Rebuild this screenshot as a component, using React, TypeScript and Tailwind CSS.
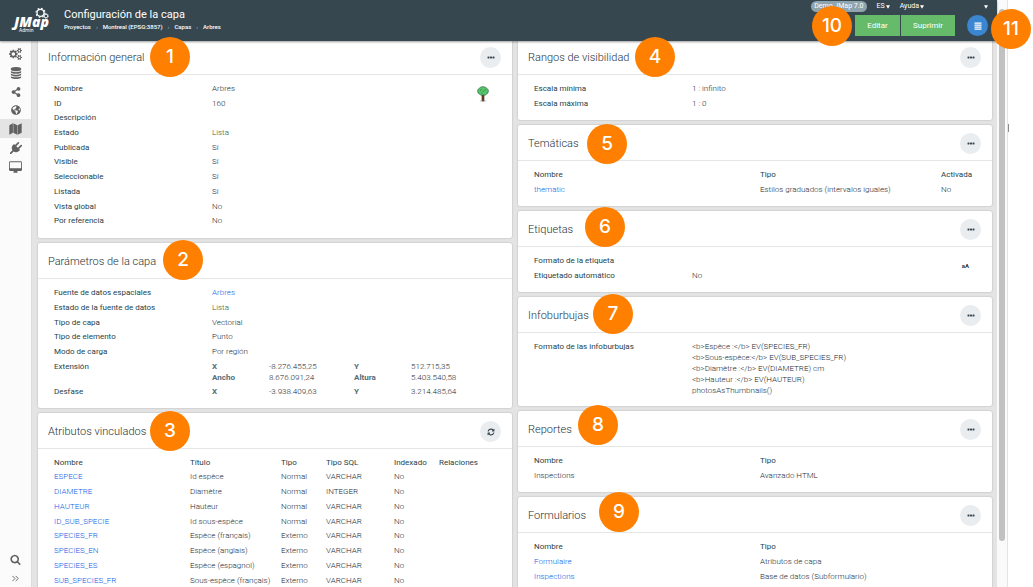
import React from 'react';
import { FaShareAlt, FaGlobeAmericas } from 'react-icons/fa';
import { ChevronsRight } from 'lucide-react';

interface CardProps {
  title: string;
  action?: 'more' | 'refresh' | 'none';
  children: React.ReactNode;
}

interface Field {
  label: string;
  value?: React.ReactNode;
}

interface Attribute {
  name: string;
  title: string;
  type: string;
  sqlType: string;
}

const generalInfo: Field[] = [
  { label: 'Nombre', value: 'Arbres' },
  { label: 'ID', value: '160' },
  { label: 'Descripción' },
  { label: 'Estado', value: <span className="text-[#1f5f1f]">Lista</span> },
  { label: 'Publicada', value: 'Sí' },
  { label: 'Visible', value: 'Sí' },
  { label: 'Seleccionable', value: 'Sí' },
  { label: 'Listada', value: 'Sí' },
  { label: 'Vista global', value: 'No' },
  { label: 'Por referencia', value: 'No' },
];

const layerParams: Field[] = [
  { label: 'Fuente de datos espaciales', value: <a href="#arbres" className="text-[#0f62e6]">Arbres</a> },
  { label: 'Estado de la fuente de datos', value: <span className="text-[#1f5f1f]">Lista</span> },
  { label: 'Tipo de capa', value: 'Vectorial' },
  { label: 'Tipo de elemento', value: 'Punto' },
  { label: 'Modo de carga', value: 'Por región' },
];

const attributes: Attribute[] = [
  { name: 'ESPECE', title: 'Id espèce', type: 'Normal', sqlType: 'VARCHAR' },
  { name: 'DIAMETRE', title: 'Diamètre', type: 'Normal', sqlType: 'INTEGER' },
  { name: 'HAUTEUR', title: 'Hauteur', type: 'Normal', sqlType: 'VARCHAR' },
  { name: 'ID_SUB_SPECIE', title: 'Id sous-espèce', type: 'Normal', sqlType: 'VARCHAR' },
  { name: 'SPECIES_FR', title: 'Espèce (français)', type: 'Externo', sqlType: 'VARCHAR' },
  { name: 'SPECIES_EN', title: 'Espèce (anglais)', type: 'Externo', sqlType: 'VARCHAR' },
  { name: 'SPECIES_ES', title: 'Espèce (espagnol)', type: 'Externo', sqlType: 'VARCHAR' },
  { name: 'SUB_SPECIES_FR', title: 'Sous-espèce (français)', type: 'Externo', sqlType: 'VARCHAR' },
];

const bubbleFormat = [
  '<b>Espèce :</b> EV(SPECIES_FR)',
  '<b>Sous-espèce:</b> EV(SUB_SPECIES_FR)',
  '<b>Diamètre :</b> EV(DIAMETRE) cm',
  '<b>Hauteur :</b> EV(HAUTEUR)',
  'photosAsThumbnails()',
];

const callouts = [
  { n: 1, x: 170, y: 57 },
  { n: 2, x: 183, y: 260 },
  { n: 3, x: 170, y: 431 },
  { n: 4, x: 655, y: 57 },
  { n: 5, x: 607, y: 144 },
  { n: 6, x: 605, y: 227 },
  { n: 7, x: 613, y: 314 },
  { n: 8, x: 598, y: 425 },
  { n: 9, x: 619, y: 512 },
  { n: 10, x: 832, y: 26 },
  { n: 11, x: 1011, y: 29 },
];

function CogsIcon() {
  return (
    <svg viewBox="0 0 1920 1792" className="h-[12px] w-[13px]" fill="currentColor">
      <path d="M896 896q0-106-75-181t-181-75-181 75-75 181 75 181 181 75 181-75 75-181zm768 512q0-52-38-90t-90-38-90 38-38 90q0 53 37.5 90.5t90.5 37.5 90.5-37.5 37.5-90.5zm0-1024q0-52-38-90t-90-38-90 38-38 90q0 53 37.5 90.5t90.5 37.5 90.5-37.5 37.5-90.5zm-384 421v185q0 10-7 19.5t-16 10.5l-155 24q-11 35-32 76 34 48 90 115 7 11 7 20 0 12-7 19-23 30-82.5 89.5t-78.5 59.5q-11 0-21-7l-115-90q-37 19-77 31-11 108-23 155-7 24-30 24h-186q-11 0-20-7.5t-10-17.5l-23-153q-34-10-75-31l-118 89q-7 7-20 7-11 0-21-8-144-133-144-160 0-9 7-19 10-14 41-53t47-61q-23-44-35-82l-152-24q-10-1-17-9.5t-7-19.5v-185q0-10 7-19.5t16-10.5l155-24q11-35 32-76-34-48-90-115-7-11-7-20 0-12 7-20 22-30 82-89t79-59q11 0 21 7l115 90q34-18 77-32 11-108 23-154 7-24 30-24h186q11 0 20 7.5t10 17.5l23 153q34 10 75 31l118-89q8-7 20-7 11 0 21 8 144 133 144 160 0 8-7 19-12 16-42 54t-45 60q23 48 34 82l152 23q10 2 17 10.5t7 19.5zm640 533v140q0 16-149 31-12 27-30 52 51 113 51 138 0 4-4 7-122 71-124 71-8 0-46-47t-52-68q-20 2-30 2t-30-2q-14 21-52 68t-46 47q-2 0-124-71-4-3-4-7 0-25 51-138-18-25-30-52-149-15-149-31v-140q0-16 149-31 13-29 30-52-51-113-51-138 0-4 4-7 4-2 35-20t59-34 30-16q8 0 46 46.5t52 67.5q20-2 30-2t30 2q51-71 92-112l6-2q4 0 124 70 4 3 4 7 0 25-51 138 17 23 30 52 149 15 149 31zm0-1024v140q0 16-149 31-12 27-30 52 51 113 51 138 0 4-4 7-122 71-124 71-8 0-46-47t-52-68q-20 2-30 2t-30-2q-14 21-52 68t-46 47q-2 0-124-71-4-3-4-7 0-25 51-138-18-25-30-52-149-15-149-31v-140q0-16 149-31 13-29 30-52-51-113-51-138 0-4 4-7 4-2 35-20t59-34 30-16q8 0 46 46.5t52 67.5q20-2 30-2t30 2q51-71 92-112l6-2q4 0 124 70 4 3 4 7 0 25-51 138 17 23 30 52 149 15 149 31z" />
    </svg>
  );
}

function DatabaseIcon() {
  return (
    <svg viewBox="0 0 1792 1792" className="h-[12px] w-[12px]" fill="currentColor">
      <path d="M896 768q237 0 443-43t325-127v170q0 69-103 128t-280 93.5-385 34.5-385-34.5-280-93.5-103-128v-170q119 84 325 127t443 43zm0 768q237 0 443-43t325-127v170q0 69-103 128t-280 93.5-385 34.5-385-34.5-280-93.5-103-128v-170q119 84 325 127t443 43zm0-384q237 0 443-43t325-127v170q0 69-103 128t-280 93.5-385 34.5-385-34.5-280-93.5-103-128v-170q119 84 325 127t443 43zm0-1152q208 0 385 34.5t280 93.5 103 128v128q0 69-103 128t-280 93.5-385 34.5-385-34.5-280-93.5-103-128v-128q0-69 103-128t280-93.5 385-34.5z" />
    </svg>
  );
}

function MapIcon() {
  return (
    <svg viewBox="0 0 24 22" className="h-[12px] w-[13px]" fill="currentColor">
      <path d="M0.6 4.2L7.2 0.6V18L0.6 21.600zM8 0.600L15.200 4.200V21.600L8 18zM16 4.200L23.400 0.600V18L16 21.600z" />
    </svg>
  );
}

function PlugIcon() {
  return (
    <svg viewBox="0 0 1792 1792" className="h-[12px] w-[12px]" fill="currentColor">
      <path d="M1755 453q37 38 37 90.5t-37 90.5l-401 400 150 150-160 160q-163 163-389.5 186.5t-411.5-100.5l-362 362h-181v-181l362-362q-124-185-100.5-411.5t186.5-389.5l160-160 150 150 400-401q38-37 91-37t90 37 37 90.5-37 90.5l-400 401 234 234 401-400q38-37 91-37t90 37z" />
    </svg>
  );
}

function DesktopIcon() {
  return (
    <svg viewBox="-64 0 1920 1664" className="h-[12px] w-[13px]" fill="currentColor">
      <path d="M1728 992v-832q0-13-9.5-22.5t-22.5-9.5h-1600q-13 0-22.5 9.5t-9.5 22.5v832q0 13 9.5 22.5t22.5 9.5h1600q13 0 22.5-9.5t9.5-22.5zm128-832v1088q0 66-47 113t-113 47h-544q0 37 16 77.5t32 71 16 43.5q0 26-19 45t-45 19h-512q-26 0-45-19t-19-45q0-14 16-44t32-70 16-78h-544q-66 0-113-47t-47-113v-1088q0-66 47-113t113-47h1600q66 0 113 47t47 113z" />
    </svg>
  );
}

function SearchIcon() {
  return (
    <svg viewBox="0 0 1792 1792" className="h-[11px] w-[11px]" fill="currentColor">
      <path d="M1216 832q0-185-131.5-316.5t-316.5-131.5-316.5 131.5-131.5 316.5 131.5 316.5 316.5 131.5 316.5-131.5 131.5-316.5zm512 832q0 52-38 90t-90 38q-54 0-90-38l-343-342q-179 124-399 124-143 0-273.5-55.5t-225-150-150-225-55.5-273.5 55.5-273.5 150-225 225-150 273.5-55.5 273.5 55.5 225 150 150 225 55.5 273.5q0 220-124 399l343 343q37 37 37 90z" />
    </svg>
  );
}

function RefreshIcon() {
  return (
    <svg viewBox="0 0 1792 1792" className="h-[8px] w-[8px]" fill="currentColor">
      <path d="M1639 1056q0 5-1 7-64 268-268 434.5t-478 166.5q-146 0-282.5-55t-243.5-157l-129 129q-19 19-45 19t-45-19-19-45v-448q0-26 19-45t45-19h448q26 0 45 19t19 45-19 45l-137 137q71 66 161 102t187 36q134 0 250-65t186-179q11-17 53-117 8-23 30-23h192q13 0 22.5 9.5t9.5 22.5zm25-800v448q0 26-19 45t-45 19h-448q-26 0-45-19t-19-45 19-45l138-138q-148-137-349-137-134 0-250 65t-186 179q-11 17-53 117-8 23-30 23h-199q-13 0-22.5-9.5t-9.5-22.5v-7q65-268 270-434.5t480-166.5q146 0 284 55.5t245 156.5l130-129q19-19 45-19t45 19 19 45z" />
    </svg>
  );
}

function DotsIcon() {
  return (
    <svg viewBox="0 0 8 3" className="h-[3px] w-[8px]" fill="currentColor">
      <rect x="0.5" y="0.5" width="2" height="2" rx="0.4" />
      <rect x="3" y="0.5" width="2" height="2" rx="0.4" />
      <rect x="5.5" y="0.5" width="2" height="2" rx="0.4" />
    </svg>
  );
}

function Caret() {
  return (
    <svg viewBox="0 0 4 4" className="h-[4px] w-[4px]" fill="currentColor">
      <path d="M0 0.200h4L2 3.800z" />
    </svg>
  );
}

function TreeIcon() {
  return (
    <svg viewBox="0 0 12 16" className="h-[16px] w-[12px]">
      <ellipse cx="6" cy="15" rx="3.4" ry="0.8" fill="#c4c4c4" />
      <path d="M5 8h2v6.8H5z" fill="#7a4420" stroke="#3b2412" strokeWidth="0.6" />
      <path d="M6 0.7c2 0 3 0.8 3.8 1.7 1.2 0.5 1.7 1.6 1.5 2.8 0 1.5-0.8 2.6-2 3.1-1.1 1.2-2.2 0.9-3.3 0.9S3.7 9.4 2.7 8.3C1.5 7.8 0.7 6.7 0.7 5.2 0.5 4 1 2.9 2.2 2.4 3 1.5 4 0.7 6 0.7z" fill="#55c56b" stroke="#1f4a2a" strokeWidth="0.6" />
      <path d="M3 4.5l1.5-1.2M6 5.8l1-1.5M8 3l1 1.2M4.5 7l1 .8" stroke="#1f6a35" strokeWidth="0.7" fill="none" />
    </svg>
  );
}

function Logo() {
  return (
    <svg viewBox="0 0 44 26" className="h-[26px] w-[44px]" fill="#fff">
      <circle cx="30.5" cy="5.8" r="3.5" fill="none" stroke="#fff" strokeWidth="1.3" />
      <circle cx="30.5" cy="5.8" r="4.5" fill="none" stroke="#fff" strokeWidth="1.1" strokeDasharray="1.7 1.834" />
      <circle cx="36" cy="9" r="1.8" fill="none" stroke="#fff" strokeWidth="0.9" />
      <circle cx="36" cy="9" r="2.5" fill="none" stroke="#fff" strokeWidth="0.6" strokeDasharray="1 0.963" />
      <text x="4" y="20" fontFamily="Open Sans, sans-serif" fontSize="14" fontWeight="800" fontStyle="italic">JMap</text>
      <text x="9" y="25" fontFamily="Roboto, sans-serif" fontSize="5">Admin</text>
    </svg>
  );
}

function Card({ title, action = 'more', children }: CardProps) {
  return (
    <section className="rounded-[2px] bg-white shadow-[0_0_2px_rgba(0,0,0,0.25)]">
      <header className="flex h-[36px] items-center justify-between border-b border-[#e4e6e8] pl-[10px] pr-[11px] pt-[2px]">
        <h2 className="pt-[2px] text-[11px] font-light text-[#263238]">{title}</h2>
        {action !== 'none' && (
          <button
            type="button"
            aria-label={action === 'refresh' ? 'Actualizar' : 'Más opciones'}
            className="flex h-[21px] w-[21px] items-center justify-center rounded-full bg-[#e9edf0] text-[#37474f]"
          >
            {action === 'refresh' ? <RefreshIcon /> : <DotsIcon />}
          </button>
        )}
      </header>
      {children}
    </section>
  );
}

function FieldRow({ label, value }: Field) {
  return (
    <div className="grid grid-cols-[158px_1fr] leading-[14px]">
      <dt className="font-normal text-[#263f4a]">{label}</dt>
      <dd>{value}</dd>
    </div>
  );
}

function ExtentLine({ values }: { values: string[] }) {
  return (
    <div className="grid grid-cols-[57px_85px_57px_1fr] leading-[11px]">
      <b className="font-bold text-[#546e7a]">{values[0]}</b>
      <span>{values[1]}</span>
      <b className="font-bold text-[#546e7a]">{values[2]}</b>
      <span>{values[3]}</span>
    </div>
  );
}

function Heading({ children }: { children: React.ReactNode }) {
  return <th scope="col" className="p-0 text-left font-normal text-[#263f4a]">{children}</th>;
}

export default function App() {
  return (
    <div className="relative flex h-screen overflow-hidden bg-white font-[Roboto,sans-serif] text-[8px] font-light text-[#1c2b33]">
      <div className="flex min-w-0 flex-1 flex-col">
        {/* Top bar */}
        <header className="z-10 flex h-[41px] shrink-0 bg-[#37474f] pl-[10px] pr-[9px] font-normal text-white shadow-[0_1px_2px_rgba(0,0,0,0.4)]">
          <a href="#inicio" aria-label="JMap Admin" className="mt-[7px]">
            <Logo />
          </a>
          <div className="ml-[10px] mt-2 flex-1">
            <h1 className="text-[11px] leading-[14px]">Configuración de la capa</h1>
            <nav className="flex gap-[5px] text-[6px] font-medium leading-[10px]">
              <a href="#proyectos">Proyectos</a>
              <span className="text-[#90a4ae]">›</span>
              <a href="#montreal">Montreal (EPSG:3857)</a>
              <span className="text-[#90a4ae]">›</span>
              <a href="#capas">Capas</a>
              <span className="text-[#90a4ae]">›</span>
              <span>Arbres</span>
            </nav>
          </div>
          <div className="flex flex-col items-end">
            <div className="flex h-[13px] items-center text-[7px]">
              <span className="mr-[10px] rounded-full bg-[#90a4ae] px-[3px] leading-[11px]">Demo JMap 7.0</span>
              <button type="button" className="mr-[10px] flex items-center gap-px">ES<Caret /></button>
              <button type="button" className="mr-[60px] flex items-center gap-px">Ayuda<Caret /></button>
              <button type="button" aria-label="Usuario"><Caret /></button>
            </div>
            <div className="mt-[2px] flex items-center">
              <button type="button" className="h-[21px] w-[45px] bg-[#66bb6a] text-[8px]">Editar</button>
              <button type="button" className="ml-px h-[21px] w-[54px] bg-[#66bb6a] text-[8px]">Suprimir</button>
              <button type="button" aria-label="Menú" className="ml-[12px] flex h-[21px] w-[21px] items-center justify-center rounded-full bg-[#3b86d1]">
                <svg viewBox="0 0 8 8" className="h-2 w-2" fill="#fff">
                  <path d="M0.5 0.5h7v1.3h-7zM0.5 2.5h7v1.3h-7zM0.5 4.5h7v1.3h-7zM0.5 6.5h7v1.3h-7z" />
                </svg>
              </button>
            </div>
          </div>
        </header>

        <div className="flex min-h-0 flex-1">
          {/* Sidebar */}
          <nav className="flex w-8 shrink-0 flex-col border-r border-[#dcdcdc] bg-[#fbfbfb] pt-[3px] text-[#616161]">
            <a href="#sistema" aria-label="Sistema" className="flex h-[19px] items-center justify-center"><CogsIcon /></a>
            <a href="#bases" aria-label="Bases de datos" className="flex h-[19px] items-center justify-center"><DatabaseIcon /></a>
            <a href="#conexiones" aria-label="Conexiones" className="flex h-[19px] items-center justify-center"><FaShareAlt className="h-[10px] w-[10px]" /></a>
            <a href="#fuentes" aria-label="Fuentes" className="flex h-[18px] items-center justify-center"><FaGlobeAmericas className="h-[10px] w-[10px]" /></a>
            <a href="#proyectos" aria-label="Proyectos" className="flex h-[19px] items-center justify-center bg-[#e4e4e4]"><MapIcon /></a>
            <a href="#despliegues" aria-label="Despliegues" className="flex h-[19px] items-center justify-center"><PlugIcon /></a>
            <a href="#aplicaciones" aria-label="Aplicaciones" className="flex h-[19px] items-center justify-center"><DesktopIcon /></a>
            <button type="button" aria-label="Buscar" className="mt-auto flex h-[19px] items-center justify-center"><SearchIcon /></button>
            <button type="button" aria-label="Expandir" className="flex h-[18px] items-center justify-center"><ChevronsRight className="h-[11px] w-[11px]" /></button>
          </nav>

          {/* The cards are scrolled slightly under the top bar */}
          <main className="-mt-[2px] grid min-w-0 flex-1 grid-cols-2 items-start gap-[6px] overflow-hidden bg-[#e4e4e4] pl-[6px] pr-[5px]">
            <div className="grid gap-[5px]">
              <Card title="Información general">
                <div className="flex items-start justify-between pb-[9px] pl-4 pr-[23px] pt-[7px]">
                  <dl className="grid min-h-[147px] flex-1 auto-rows-fr">
                    {generalInfo.map((f) => <FieldRow key={f.label} {...f} />)}
                  </dl>
                  <div className="pt-1">
                    <TreeIcon />
                  </div>
                </div>
              </Card>

              <Card title="Parámetros de la capa" action="none">
                <dl className="pb-[9px] pl-4 pt-[7px]">
                  <div className="grid min-h-[74px] auto-rows-fr">
                    {layerParams.map((f) => <FieldRow key={f.label} {...f} />)}
                  </div>
                  <div className="grid grid-cols-[158px_1fr] pb-[2px] pt-[1px] leading-[11px]">
                    <dt className="font-normal text-[#263f4a]">Extensión</dt>
                    <dd>
                      <ExtentLine values={['X', '-8.276.455,25', 'Y', '512.715,35']} />
                      <ExtentLine values={['Ancho', '8.676.091,24', 'Altura', '5.403.540,58']} />
                    </dd>
                  </div>
                  <div className="grid grid-cols-[158px_1fr] pb-[2px] pt-[1px] leading-[11px]">
                    <dt className="font-normal text-[#263f4a]">Desfase</dt>
                    <dd>
                      <ExtentLine values={['X', '-3.938.409,63', 'Y', '3.214.485,64']} />
                    </dd>
                  </div>
                </dl>
              </Card>

              <Card title="Atributos vinculados" action="refresh">
                <div className="pb-2 pl-4 pt-[7px]">
                  <table className="h-[132px] w-full table-fixed leading-[14px]">
                    <colgroup>
                      <col className="w-[136px]" />
                      <col className="w-[91px]" />
                      <col className="w-[45px]" />
                      <col className="w-[68px]" />
                      <col className="w-[45px]" />
                      <col />
                    </colgroup>
                    <thead>
                      <tr>
                        <Heading>Nombre</Heading>
                        <Heading>Título</Heading>
                        <Heading>Tipo</Heading>
                        <Heading>Tipo SQL</Heading>
                        <Heading>Indexado</Heading>
                        <Heading>Relaciones</Heading>
                      </tr>
                    </thead>
                    <tbody>
                      {attributes.map((a) => (
                        <tr key={a.name}>
                          <td className="p-0"><a href="#atributo" className="text-[#0f62e6]">{a.name}</a></td>
                          <td className="whitespace-nowrap p-0">{a.title}</td>
                          <td className="p-0">{a.type}</td>
                          <td className="p-0">{a.sqlType}</td>
                          <td className="p-0">No</td>
                          <td className="p-0"></td>
                        </tr>
                      ))}
                    </tbody>
                  </table>
                </div>
              </Card>
            </div>

            <div className="grid gap-[5px]">
              <Card title="Rangos de visibilidad">
                <dl className="grid min-h-[45px] auto-rows-fr pb-[8px] pl-4 pt-[7px]">
                  <FieldRow label="Escala mínima" value="1 : infinito" />
                  <FieldRow label="Escala máxima" value="1 : 0" />
                </dl>
              </Card>

              <Card title="Temáticas">
                <div className="pb-[8px] pl-4 pt-[7px]">
                  <table className="h-[30px] w-full table-fixed leading-[14px]">
                    <colgroup>
                      <col className="w-[226px]" />
                      <col className="w-[181px]" />
                      <col />
                    </colgroup>
                    <thead>
                      <tr>
                        <Heading>Nombre</Heading>
                        <Heading>Tipo</Heading>
                        <Heading>Activada</Heading>
                      </tr>
                    </thead>
                    <tbody>
                      <tr>
                        <td className="p-0"><a href="#thematic" className="text-[#0f62e6]">thematic</a></td>
                        <td className="p-0">Estilos graduados (intervalos iguales)</td>
                        <td className="p-0">No</td>
                      </tr>
                    </tbody>
                  </table>
                </div>
              </Card>

              <Card title="Etiquetas">
                <div className="flex items-start pb-[8px] pl-4 pr-[23px] pt-[7px]">
                  <dl className="grid min-h-[30px] flex-1 auto-rows-fr">
                    <FieldRow label="Formato de la etiqueta" />
                    <FieldRow label="Etiquetado automático" value="No" />
                  </dl>
                  <span className="pt-[6px] text-[6px] font-bold leading-[11px] text-[#333]">aA</span>
                </div>
              </Card>

              <Card title="Infoburbujas">
                <dl className="grid grid-cols-[158px_1fr] pb-[10px] pl-4 pt-[8px] leading-[11px]">
                  <dt className="font-normal text-[#263f4a]">Formato de las infoburbujas</dt>
                  <dd>
                    {bubbleFormat.map((line) => <div key={line}>{line}</div>)}
                  </dd>
                </dl>
              </Card>

              <Card title="Reportes">
                <div className="pb-[8px] pl-4 pt-[7px]">
                  <table className="h-[30px] w-full table-fixed leading-[14px]">
                    <colgroup>
                      <col className="w-[226px]" />
                      <col />
                    </colgroup>
                    <thead>
                      <tr>
                        <Heading>Nombre</Heading>
                        <Heading>Tipo</Heading>
                      </tr>
                    </thead>
                    <tbody>
                      <tr>
                        <td className="p-0">Inspections</td>
                        <td className="p-0">Avanzado HTML</td>
                      </tr>
                    </tbody>
                  </table>
                </div>
              </Card>

              <Card title="Formularios">
                <div className="pb-[8px] pl-4 pt-[7px]">
                  <table className="h-[45px] w-full table-fixed leading-[14px]">
                    <colgroup>
                      <col className="w-[226px]" />
                      <col />
                    </colgroup>
                    <thead>
                      <tr>
                        <Heading>Nombre</Heading>
                        <Heading>Tipo</Heading>
                      </tr>
                    </thead>
                    <tbody>
                      <tr>
                        <td className="p-0"><a href="#formulaire" className="text-[#0f62e6]">Formulaire</a></td>
                        <td className="p-0">Atributos de capa</td>
                      </tr>
                      <tr>
                        <td className="p-0"><a href="#inspections" className="text-[#0f62e6]">Inspections</a></td>
                        <td className="p-0">Base de datos (Subformulario)</td>
                      </tr>
                    </tbody>
                  </table>
                </div>
              </Card>
            </div>
          </main>
        </div>
      </div>

      {/* Page scrollbar */}
      <div className="flex w-[10px] justify-center bg-[#fafafa] pt-[9px]">
        <div className="h-[92%] w-[6px] rounded-full bg-[#c1c1c1]" />
      </div>
      <div className="w-[26px] border-l border-[#e4e4e4] pt-[124px]">
        <div className="h-2 w-px bg-[#8a8a8a]" />
      </div>

      {callouts.map((c) => (
        <span
          key={c.n}
          style={{ left: c.x, top: c.y }}
          className="absolute z-20 flex h-10 w-10 -translate-x-1/2 -translate-y-1/2 items-center justify-center rounded-full bg-[#ff8000] font-[Inter,sans-serif] text-[19px] font-medium text-white"
        >
          {c.n}
        </span>
      ))}
    </div>
  );
}
